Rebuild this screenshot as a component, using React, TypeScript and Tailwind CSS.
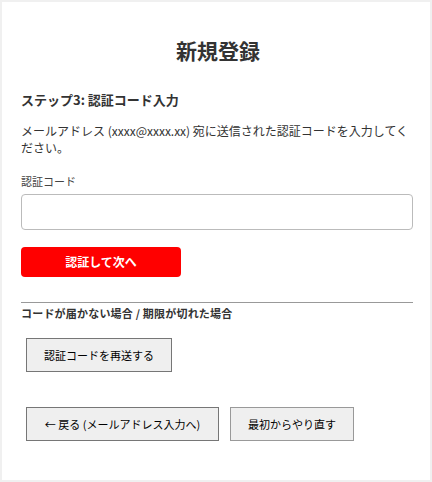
export default function App() {
  return (
    <div
      className="min-h-[482px] w-[432px] bg-[#f0f0f0] p-[2px] text-[#333]"
      style={{ fontFamily: '"Noto Sans CJK JP", "Noto Sans", sans-serif' }}
    >
      <div className="h-[478px] w-[428px] bg-white pl-[19px] pr-[15px] pt-[34px]">
        <h1 className="text-center text-[21px] font-bold leading-[28px] text-[#333]">新規登録</h1>

        <h2 className="mt-[27px] text-[13px] font-bold leading-[18px]">ステップ3: 認証コード入力</h2>

        <p className="mt-[13px] text-[12px] leading-[17px]">
          メールアドレス (xxxx@xxxx.xx) 宛に送信された認証コードを入力してください。
        </p>

        <label className="mt-[17px] block text-[11px] leading-[16px] text-[#444]">認証コード</label>
        <input
          type="text"
          className="mt-[5px] block h-[36px] w-[392px] rounded-[4px] border border-[#bbb] bg-white px-2 text-[13px] outline-none"
        />

        <button className="mt-[17px] flex h-[30px] w-[160px] items-center justify-center rounded-[4px] bg-[#ff0000] text-[12px] font-bold text-white">
          認証して次へ
        </button>

        <hr className="mt-[25px] w-[392px] border-t border-[#999]" />
        <p className="mt-[2px] text-[11px] font-bold leading-[16px] tracking-[0.2px]">
          コードが届かない場合 / 期限が切れた場合
        </p>

        <div className="ml-[5px] mt-[17px]">
          <button className="h-[34px] w-[146px] border border-[#767676] bg-[#efefef] text-[11px] text-black">
            認証コードを再送する
          </button>
        </div>

        <div className="ml-[5px] mt-[35px] flex gap-[11px]">
          <button className="h-[34px] w-[193px] border border-[#767676] bg-[#efefef] text-[11px] text-black">
            ← 戻る (メールアドレス入力へ)
          </button>
          <button className="h-[34px] w-[124px] border border-[#999] bg-[#efefef] text-[11px] text-black">
            最初からやり直す
          </button>
        </div>
      </div>
    </div>
  );
}
